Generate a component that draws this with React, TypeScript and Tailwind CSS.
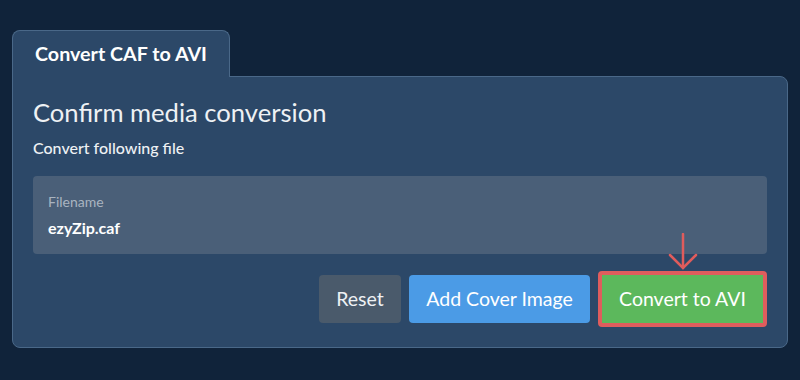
export default function App() {
  return (
    <div className="min-h-[380px] w-[800px] bg-[#10233a] px-[12px] pt-[30px] font-['Lato','Open_Sans',sans-serif] text-[#eef1f4]">
      <div className="relative z-10 -mb-px flex h-[47px] w-[218px] items-center rounded-t-[8px] border border-b-0 border-[#4a6888] bg-[#2c4868] pl-[22px]">
        <span className="text-[19.7px] font-bold text-white">Convert CAF to AVI</span>
      </div>
      <div className="w-[776px] rounded-b-[8px] rounded-tr-[8px] border border-[#4a6888] bg-[#2c4868] px-[20px] pb-[20px] pt-[18px]">
        <h1 className="text-[25.6px] leading-[34px]">Confirm media conversion</h1>
        <p className="mt-[8px] text-[16px] font-medium leading-[22px]">Convert following file</p>
        <div className="mt-[17px] h-[78px] rounded-[4px] bg-[#4a5f78] px-[15px] pt-[17px]">
          <div className="text-[14px] leading-[18px] text-[#a9b4c0]">Filename</div>
          <div className="mt-[7px] text-[16px] font-bold leading-[20px] text-white">ezyZip.caf</div>
        </div>
        <div className="mt-[17px] flex items-center justify-end gap-[8px]">
          <button className="h-[48px] w-[82px] rounded-[4px] bg-[#4a5a6b] text-[19.5px] text-[#eef1f4]">Reset</button>
          <button className="h-[48px] w-[181px] rounded-[4px] bg-[#4b9be6] text-[19.5px] text-white">Add Cover Image</button>
          <div className="relative">
            <svg className="absolute left-1/2 top-[-38px] -translate-x-1/2" width="30" height="38" viewBox="0 0 30 38" fill="none" stroke="#e05c5c" strokeWidth="2.5" strokeLinecap="round">
              <path d="M15 1 L15 35" />
              <path d="M2 22 L15 35 L28 22" />
            </svg>
            <button className="h-[56px] w-[169px] rounded-[4px] border-4 border-[#df5d5d] bg-[#5cb85c] text-[19.5px] text-white">Convert to AVI</button>
          </div>
        </div>
      </div>
    </div>
  )
}
